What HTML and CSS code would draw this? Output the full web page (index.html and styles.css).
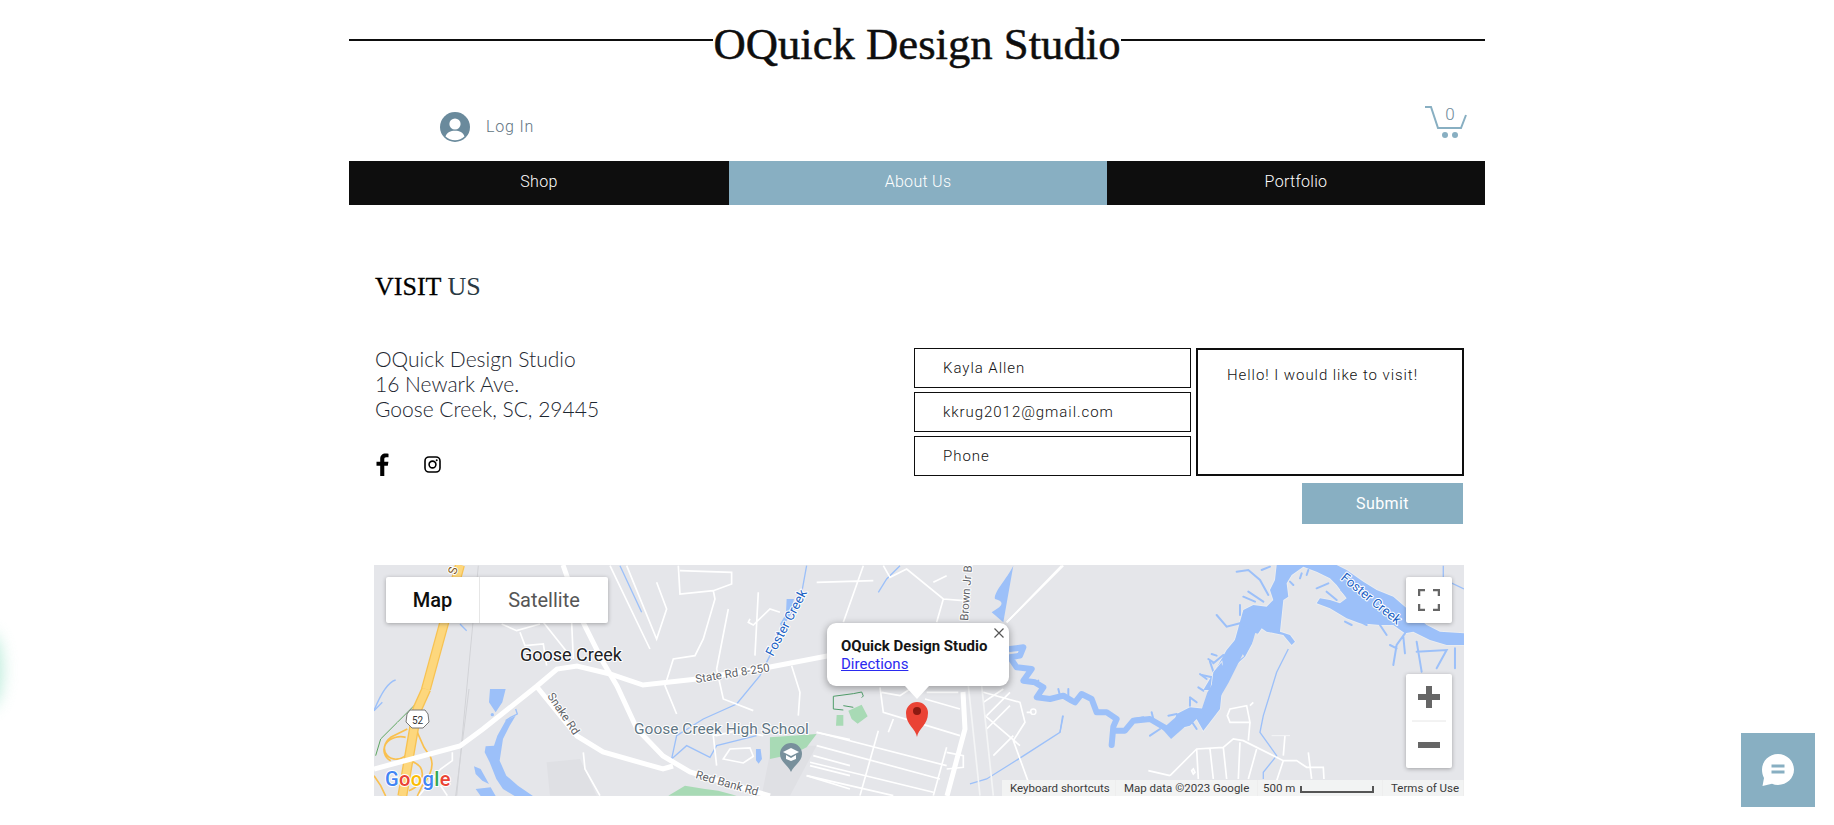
FILE: index.html
```html
<!DOCTYPE html>
<html lang="en">
<head>
    <meta charset="UTF-8">
    <meta name="viewport" content="width=device-width, initial-scale=1.0">
    <title>OQuick Design Studio</title>
    <link rel="stylesheet" href="styles.css">
</head>
<body>
    <div class="side-glow"></div>
    <div class="site">
        <header>
            <div class="title-row">
                <span class="title-line"></span>
                <h1>OQuick Design Studio</h1>
                <span class="title-line"></span>
            </div>
            <div class="user-row">
                <a class="login" href="#">
                    <svg class="avatar" viewBox="0 0 30 30">
                        <circle cx="15" cy="15" r="15" fill="#6a8a9c"/>
                        <circle cx="15" cy="12" r="5.6" fill="#fff"/>
                        <path d="M5.500 24.500c1.500-4.500 5-5.800 9.500-5.800s8 1.300 9.500 5.800c-2.500 2.300-5.800 3.700-9.500 3.700s-7-1.400-9.500-3.700z" fill="#fff"/>
                    </svg>
                    <span>Log In</span>
                </a>
                <svg class="cart" viewBox="0 0 42 32">
                    <path d="M0 1h6l7 21h23l5-13" fill="none" stroke="#88afc2" stroke-width="2"/>
                    <circle cx="20" cy="29" r="3" fill="#88afc2"/>
                    <circle cx="30" cy="29" r="3" fill="#88afc2"/>
                    <text x="25" y="14" text-anchor="middle" class="cart-count">0</text>
                </svg>
            </div>
            <nav class="menu">
                <a href="#">Shop</a>
                <a href="#" class="menu-about">About Us</a>
                <a href="#">Portfolio</a>
            </nav>
        </header>

        <main>
            <h2><b>VISIT</b> US</h2>
            <div class="contact-row">
                <div class="address">
                    <p>OQuick Design Studio<br>16 Newark Ave.<br>Goose Creek, SC, 29445</p>
                    <div class="social">
                        <svg class="icon-fb" viewBox="0 0 14 23"><path d="M9.300 23V12.800h3.500l.6-4H9.300V6.300c0-1.200.4-2 2-2h2.200V.7C13.100.6 11.900.5 10.500.5 7.400.5 5.200 2.400 5.200 5.900v2.900H1.500v4h3.700V23z" fill="#000"/></svg>
                        <svg class="icon-ig" viewBox="0 0 17 17">
                            <rect x="1" y="1" width="15" height="15" rx="4" fill="none" stroke="#000" stroke-width="1.600"/>
                            <circle cx="8.500" cy="8.500" r="3.400" fill="none" stroke="#000" stroke-width="1.600"/>
                            <circle cx="12.700" cy="4.300" r="1" fill="#000"/>
                        </svg>
                    </div>
                </div>
                <form class="visit-form" onsubmit="return false">
                    <input type="text" value="Kayla Allen">
                    <textarea class="message">Hello! I would like to visit!</textarea>
                    <input type="email" value="kkrug2012@gmail.com">
                    <input type="text" placeholder="Phone">
                    <button type="submit">Submit</button>
                </form>
            </div>

            <div class="map">
                <svg class="map-art" viewBox="0 0 1090 231">
                    <!-- left part of the map -->
                    <g transform="translate(-4 -6) scale(.3333)">
                        <path class="z-block" d="M530 610l100-10 50 110H540z"/>
                        <path class="z-block" d="M1205 560h135l-80 150h-85z"/>
                        <path class="z-park" d="M1200 535l140-10-30 40-40 20-70 15z"/>
                        <path class="z-park" d="M895 710l50-30 60 10 40 5 55 15z"/>
                        <path class="z-water" d="M1250 120h22l-12 50-22 35-8-10 18-30zM1158 570h14l4 30-10 14-8-10z"/>
                        <path class="z-stream" d="M1310 20l-20 110-50 60-40 100-30 60-70 85-100 45-80 50-15 70 45-40 70 35 20-35 120-30M750 20l65 140M12 455c20-50 40-85 65-92M270 195l20 20"/>
                        <path class="z-grey" d="M325 20l-65 690"/>
                        <g class="z-road">
                            <path d="M720 20l120 250M770 20l90 220 30-90-30-80M640 190l60 120M395 195l45 20 70-20M450 220l15 40 55-5 10 65M520 190l80 100M605 190l5 110"/>
                            <path d="M925 20l5 85 100-10 55-20v-35l-155-5M1030 95l5 25-35 120-25 50-65 10-25 80 35 85M1075 150l-35 180 20 90 90 35M1165 100l-10 190M1140 180l-5 10 15 8 50-48 30 10M1265 320l25 80-5 70M640 580l5 50 45 80"/>
                            <path d="M1340 520l100 22M1310 650l130 40M1330 590l110 30M1320 620l120 30"/>
                            <path d="M1080 570l-20 30 60 12 30-20-10-25zM1030 530l10 90M1020 525l20 5 60-15 80 15"/>
                        </g>
                    </g>

                    <!-- middle part of the map -->
                    <g transform="translate(426 -6) scale(.3333)">
                        <path class="z-park" d="M145 455l40-18 18 35-30 22-18-14zM110 468h20v32h-22z"/>
                        <path class="z-parkline" d="M100 450v-38l60-8 25-5 5 12-5 5M100 450l30 3M130 440l30 5"/>
                        <path class="z-water" d="M640 20c-20 40-60 80-55 100 20 5 30 15 5 30l-15 10 35 30"/>
                        <path class="z-stream" d="M300 20l-40 40-25 40M790 470l-10 50-140 90-80 50-50 15"/>
                        <g class="z-road">
                            <path d="M190 20l-60 170M250 20l20 35 50-25 110 90 60 5M430 120l-20 70M620 190L790 20M50 70l170-5M400 70l40-20"/>
                            <path d="M240 385l10 75 230 70M245 400l55 10 30-20M380 400l95 0M375 420l105 30M280 480l-15 40"/>
                            <path d="M50 520l390 100M50 560l370 100M30 610l370 90M20 650l260 60M235 515l-55 195M440 565l-40 145M440 580l50 10v35l-50 5"/>
                            <path d="M550 430l60-40M560 470l70-70M550 400l110 30 15 60-35 55 60 165M555 470l105 90M560 510l70-70M580 590l60-60M680 460h15"/>
                        </g>
                        <path class="z-road-light" d="M505 380l35 330M545 380l35 330"/>
                        <circle cx="700" cy="458" r="8" class="z-ring"/>
                    </g>

                    <!-- right part of the map -->
                    <g transform="translate(626 -6) scale(.3333)">
                        <path class="z-stream" d="M865 270l-35 70-40 130-10 50 50 70-40 50v20M1330 20v40l62 30M188 470l-8 50"/>
                        <g class="z-road">
                            <path d="M510 650l80-80 80-5 30-25 30 5 120 60h40l30 20h50l2 35M590 570l5 90M630 570l10 90M670 565l10 95M720 550l-5 110M770 570l-25 90M850 605l-20 60"/>
                            <path d="M690 450l50-10 10 50h-60l-8-20zM750 440l10-10M750 490l-5 55M855 530l-5 60M925 580l10 80M445 635l65 15M580 630l5 10-5 5-5-10zM185 20L20 190"/>
                        </g>
                        <path class="z-thin" d="M815 530h55"/>
                    </g>

                    <!-- creek, traced from its banks -->
                    <g transform="translate(786 0) scale(.3333)">
                        <path class="z-water z-bank" d="M350 0H530l30 15 50 35 40 25 50 20 40 35 60 50 40 20 72 5v35h-52l-50-15-50-25-25 5-35-25h-40l-60-5-40-15-50-30-40-15 10-15 30 5 30 10 20-15-30-40-20-20-40-20-40-15-35 25-15 25 5 40-15 10-10 95 30 10 15 20-10 10-25-30-50-10-15-10-20 30-30 55-45 40-20 30-15 30h-45l30-50 40-70 25-30 15-55 10-35 30-15 40 5 20-20-10-30 15-30z"/>
                        <path class="z-water" d="M580 80l30 25 40 30 40 30-50-10-50-30-20-20-30-30 20-5z"/>
                        <path class="z-branch" d="M230 20l35-5 35 30 25 45M265 80l45 30M250 95l35 15M170 150l30 35 40-10M240 120v30M160 295l30-25M125 330l45 10M150 290l10 30M330 5l-25 10M470 70l35-15M500 80l30 25M400 60l-10-10M420 40l5-15M440 30l5-15"/>
                        <path class="z-land" d="M220 200l-15 30M290 205l-10 35M250 270l-20 15M215 310l-20 20"/>
                        <path class="z-branch" d="M735 205l-25 35-10 60M730 215l5 50M690 240l20 10M770 230l15 90M770 260l90-5-30 55M885 250v60M600 170l20 10M660 180l20 30M555 170l20 10"/>
                    </g>
                    <g transform="translate(626 54) scale(.3333)">
                        <path class="z-water z-bank" d="M665 130l5 40-10 100-50 65-20-35-20 20-40 10-15-5 15-40 40-20 50 5 10-30 10-80z"/>
                        <path class="z-river-wide" d="M745 30l-25 48-50 100-30 52-20 60"/>
                        <path class="z-river-wide" d="M540 310l-40 35"/>
                        <path class="z-river" d="M510 335l-60-35-50 5-25 30h-35M335 378l5-55 10-23-30-20h-30l-15-40-30-15-20 25-10-5-25-15-40 10-40-5 20-30-25-15-35-5 25-35-45-5-20-30 30-5 10-25-40 5"/>
                        <path class="z-branch" d="M590 250l-20-15M610 215l-15-10M620 180l-20-15M640 130l-15-10M650 110l-15-5M570 260v-20M530 285l-25 5M460 300l-5-20M430 295l-30 5M480 330l-30 20M520 320l-5 25M570 300l20 30M180 230l-5-20M205 230v-20M110 195l5-10M665 200l15-25M670 150l15-10"/>
                    </g>

                    <!-- highway 52 and the main roads, from the lower left -->
                    <g transform="translate(0 124) scale(.3333)">
                        <path class="z-water" d="M425 80l-30 15-25 45-10 30-25 2-3 18 15 30 20 50 20 30 35 21h55l-45-31-35-30-20-45 10-65 20-40zM300 232l20 8 25 45-20-10-20-20zM305 300l45-5 15 26h-45zM348 0l-3 40 20 30 20-30 10-40z"/>
                        <circle cx="355" cy="77" r="5" class="z-fill-water"/>
                        <path class="z-stream" d="M25 40L0 65M395 95l15-10 20-10-5-15"/>
                        <path class="z-grey" d="M285 0l-40 321"/>
                        <path class="z-ramp" d="M100 120l-50 25c-20 15-25 40-10 55s40 15 60-5M95 145c-20-5-45 0-60 20-10 15-5 40 15 50M130 130l20 45 20 30c10 25 0 55-25 85l-15 31M105 215c20 5 40 15 40 40s-15 40-40 50M0 260l20 30 15 31"/>
                        <path class="z-green" d="M130 40l-60 60-50 50-15 50"/>
                        <path class="z-hw-edge" d="M157 0L130 60 85 321"/>
                        <path class="z-hw" d="M157 0L130 60 85 321"/>
                    </g>
                    <path class="hw-edge" d="M86 0L52 124"/>
                    <path class="hw" d="M86 0L52 124"/>

                    <g class="road-main">
                        <path d="M0 204l86-23 23-17 54-43 20-17 20-3 33 8 33 11 54-6 73-12 57-11h150"/>
                        <path d="M189 0l20 57 20 40 14 24 20 43 26 27 27 16 33 10 47 14"/>
                        <path d="M163 122l40 49 26 16 60 17 10-3M589 127l2 37-18 67"/>
                    </g>
                    <g transform="translate(0 124) scale(.3333)">
                        <path class="z-road" d="M235 190v25l-35 25-65 80M200 290l20 30"/>
                    </g>

                    <!-- route 52 shield -->
                    <path class="shield" d="M33 149l3-4h15l3 4 1 8-6 6H38l-6-6z"/>
                    <text class="label-shield" x="43.500" y="158.500" text-anchor="middle">52</text>

                    <text class="label-brown" transform="translate(82 10) rotate(-76)">S</text>
                    <text class="label-city" x="146" y="96">Goose Creek</text>
                    <text class="label-school" x="260" y="169">Goose Creek High School</text>
                    <text class="label-road" transform="translate(322 118) rotate(-9)">State Rd 8-250</text>
                    <text class="label-road" transform="translate(173 131) rotate(56)">Snake Rd</text>
                    <text class="label-road" transform="translate(321 213) rotate(16)">Red Bank Rd</text>
                    <text class="label-road" transform="translate(594 56) rotate(-86)">Brown Jr Blvd</text>
                    <text class="label-water" transform="translate(399 92) rotate(-62)">Foster Creek</text>
                    <text class="label-water" transform="translate(966 14) rotate(39)">Foster Creek</text>

                    <!-- school pin -->
                    <path class="pin-school" d="M417 207c-2-6-11-10-11-18a11 11 0 0 1 22 0c0 8-9 12-11 18z"/>
                    <path d="M409 187l8-4 8 4-8 4zM412 190v4l5 2 5-2v-4l-5 3z" fill="#fff"/>

                    <!-- marker -->
                    <path class="pin-red" d="M543 172c-1-8-11-12-11-24a11 11 0 0 1 22 0c0 12-10 16-11 24z"/>
                    <circle cx="543" cy="146" r="4" fill="#8b1a12"/>

                    <text class="google-logo" x="11" y="221"><tspan fill="#4285f4">G</tspan><tspan fill="#ea4335">o</tspan><tspan fill="#fbbc05">o</tspan><tspan fill="#4285f4">g</tspan><tspan fill="#34a853">l</tspan><tspan fill="#ea4335">e</tspan></text>
                </svg>

                <div class="map-type">
                    <span class="map-type-on">Map</span>
                    <span class="map-type-off">Satellite</span>
                </div>

                <button class="map-btn map-full" type="button">
                    <svg viewBox="0 0 22 22" width="22" height="22"><path d="M1 7V1h6M15 1h6v6M21 15v6h-6M7 21H1v-6" fill="none" stroke="#666" stroke-width="2.500"/></svg>
                </button>
                <div class="map-zoom">
                    <svg viewBox="0 0 46 94" width="46" height="94">
                        <path d="M12 23h22M23 12v22" stroke="#666" stroke-width="6" fill="none"/>
                        <path d="M6 47h34" stroke="#e6e6e6" stroke-width="1"/>
                        <path d="M12 71h22" stroke="#666" stroke-width="6" fill="none"/>
                    </svg>
                </div>

                <div class="popup">
                    <strong>OQuick Design Studio</strong>
                    <a href="#">Directions</a>
                    <svg class="popup-close" viewBox="0 0 10 10"><path d="M.5.5l9 9M9.500.5l-9 9" stroke="#555" stroke-width="1.200"/></svg>
                </div>

                <div class="attribution">
                    <span class="attr-keys">Keyboard shortcuts</span>
                    <span class="attr-data">Map data ©2023 Google</span>
                    <span class="attr-scale">500 m<i class="scale-bar"></i></span>
                    <span class="attr-terms">Terms of Use</span>
                </div>
            </div>
        </main>
    </div>

    <button class="chat-btn" type="button">
        <svg viewBox="0 0 34 34" width="34" height="34">
            <path d="M17 1c8.800 0 16 6.900 16 15.600S25.800 32 17 32c-2.200 0-4.200-.4-6-1.200L1.500 33 3 25C1.700 22.800 1 19.800 1 16.600 1 7.900 8.200 1 17 1z" fill="#fff"/>
            <rect x="10.500" y="11.500" width="13" height="3" fill="#88afc2"/>
            <rect x="10.500" y="17.500" width="13" height="3" fill="#88afc2"/>
        </svg>
    </button>
</body>
</html>
```

FILE: styles.css
```css
* {
    box-sizing: border-box;
}
html, body {
    margin: 0;
    height: 825px;
    overflow: hidden;
    background: #fff;
}
body {
    font-family: Roboto, "Liberation Sans", sans-serif;
    color: #0e0e0e;
}
a {
    text-decoration: none;
}
.site {
    width: 1136px;
    margin: 0 auto;
}

/* header */
.title-row {
    display: flex;
    align-items: flex-start;
    height: 80px;
}
.title-line {
    flex: 1;
    height: 2px;
    margin-top: 39px;
    background: #0e0e0e;
}
h1 {
    margin: 8px 0 0;
    font-family: "Liberation Serif", serif;
    font-size: 44.700px;
    font-weight: 400;
    line-height: 72px;
    white-space: nowrap;
    -webkit-text-stroke: .5px #0e0e0e;
}
.user-row {
    display: flex;
    justify-content: space-between;
    align-items: flex-start;
    height: 81px;
    padding: 26px 18px 0 91px;
}
.login {
    display: flex;
    align-items: center;
    gap: 16px;
    margin-top: 6px;
    color: #5f7482;
    font-size: 16px;
    font-weight: 300;
    letter-spacing: .8px;
}
.login span {
    margin-top: -2px;
}
.avatar {
    width: 30px;
    height: 30px;
}
.cart {
    width: 42px;
    height: 32px;
    overflow: visible;
}
.cart-count {
    font-family: Roboto, sans-serif;
    font-size: 17px;
    font-weight: 300;
    fill: #6d8899;
}
.menu {
    display: grid;
    grid-template-columns: 380px 378px 378px;
    height: 44px;
}
.menu a {
    color: #fff;
    font-size: 16px;
    font-weight: 300;
    letter-spacing: .3px;
    line-height: 42px;
    text-align: center;
    background: #0e0e0e;
}
.menu .menu-about {
    background: #88afc2;
}

/* visit section */
main {
    padding: 0 21px 0 25px;
}
h2 {
    margin: 67px 0 45px 1px;
    font-family: "Liberation Serif", serif;
    font-size: 26px;
    font-weight: 400;
    line-height: 30px;
    color: #2a3a44;
}
h2 b {
    font-weight: 400;
    color: #000;
    -webkit-text-stroke: .3px #000;
}
.contact-row {
    display: flex;
    justify-content: space-between;
    margin-bottom: 41px;
}
.address p {
    margin: -1px 0 0 1px;
    font-family: Lato, sans-serif;
    font-size: 21px;
    font-weight: 300;
    line-height: 25px;
    color: #1c2630;
}
.social {
    display: flex;
    align-items: center;
    gap: 35px;
    margin: 32px 0 0 1px;
    height: 23px;
}
.icon-fb {
    width: 14px;
    height: 23px;
}
.icon-ig {
    width: 17px;
    height: 17px;
}
.visit-form {
    display: grid;
    grid-template-columns: 277px 268px;
    grid-template-rows: 40px 40px 40px auto;
    gap: 4px 5px;
    margin-top: 1px;
}
.visit-form input,
.visit-form textarea {
    font-family: Roboto, sans-serif;
    font-size: 15px;
    font-weight: 300;
    letter-spacing: .95px;
    color: #111;
    background: #fff;
    border-radius: 0;
    outline: none;
}
.visit-form input {
    width: 100%;
    padding: 0 0 1px 28px;
    border: 1px solid #0e0e0e;
}
.visit-form input::placeholder {
    color: #111;
    opacity: 1;
}
.visit-form .message {
    grid-column: 2;
    grid-row: 1 / span 3;
    padding: 16px 10px 0 29px;
    border: 2px solid #0e0e0e;
    resize: none;
}
.visit-form button {
    grid-column: 2;
    grid-row: 4;
    justify-self: end;
    width: 161px;
    height: 41px;
    margin: 3px 1px 0 0;
    border: none;
    color: #fff;
    font-family: Roboto, sans-serif;
    font-size: 16px;
    font-weight: 400;
    letter-spacing: .4px;
    background: #88afc2;
}

/* map */
.map {
    position: relative;
    height: 231px;
    overflow: hidden;
    background: #e5e6ea;
}
.map-art {
    display: block;
    width: 1090px;
    height: 231px;
}
/* the z- classes are drawn in groups scaled to a third, so widths are x3 */
.z-block {
    fill: #dfe0e4;
}
.z-park {
    fill: #a8dab5;
}
.z-parkline {
    fill: none;
    stroke: #4f9d69;
    stroke-width: 3;
}
.z-water,
.z-fill-water {
    fill: #9cc0f9;
}
.z-bank {
    stroke: #eceef1;
    stroke-width: 5;
    paint-order: stroke;
}
.z-stream {
    fill: none;
    stroke: #9cc0f9;
    stroke-width: 4;
}
.z-river {
    fill: none;
    stroke: #9cc0f9;
    stroke-width: 18;
    stroke-linejoin: round;
    stroke-linecap: round;
}
.z-river-wide {
    fill: none;
    stroke: #9cc0f9;
    stroke-width: 40;
    stroke-linejoin: round;
}
.z-branch {
    fill: none;
    stroke: #9cc0f9;
    stroke-width: 6;
    stroke-linecap: round;
}
.z-land {
    fill: none;
    stroke: #e5e6ea;
    stroke-width: 9;
}
.z-grey {
    fill: none;
    stroke: #d2d3d7;
    stroke-width: 3;
}
.z-road {
    fill: none;
    stroke: #fff;
    stroke-width: 5;
}
.z-road-light {
    fill: none;
    stroke: #f4f5f6;
    stroke-width: 5;
}
.z-thin {
    fill: none;
    stroke: #f5f5f7;
    stroke-width: 3;
}
.z-ring {
    fill: none;
    stroke: #fff;
    stroke-width: 4;
}
.z-ramp {
    fill: none;
    stroke: #f9c04f;
    stroke-width: 5;
}
.z-green {
    fill: none;
    stroke: #5da65f;
    stroke-width: 3;
}
.z-hw-edge {
    fill: none;
    stroke: #f7c252;
    stroke-width: 30;
}
.z-hw {
    fill: none;
    stroke: #fdd77d;
    stroke-width: 22;
}
.hw {
    fill: none;
    stroke: #fdd77d;
    stroke-width: 7.500;
}
.hw-edge {
    fill: none;
    stroke: #f7c252;
    stroke-width: 10;
}
.road-main path {
    fill: none;
    stroke: #fff;
    stroke-width: 5;
}
.shield {
    fill: #fff;
    stroke: #777;
    stroke-width: 1;
}
.map-art text {
    font-family: Roboto, sans-serif;
    paint-order: stroke;
    stroke: #fff;
    stroke-width: 2px;
    stroke-linejoin: round;
}
.map-art .label-shield {
    font-size: 10px;
    fill: #333;
    stroke: none;
}
.label-brown {
    font-size: 12px;
    fill: #80581c;
}
.label-city {
    font-size: 18px;
    fill: #202124;
}
.label-school {
    font-size: 15.500px;
    fill: #5f7684;
}
.label-road {
    font-size: 11.500px;
    fill: #5f6368;
}
.label-water {
    font-size: 13px;
    fill: #1a5fc4;
}
.pin-school {
    fill: #78909c;
}
.pin-red {
    fill: #ea4335;
}
.google-logo {
    font-size: 20px;
    font-weight: 500;
    letter-spacing: .4px;
}

.map-type {
    position: absolute;
    left: 12px;
    top: 12px;
    display: flex;
    height: 46px;
    border-radius: 2px;
    background: #fff;
    box-shadow: 0 1px 4px rgba(0, 0, 0, .3);
    font-size: 20px;
    line-height: 46px;
    text-align: center;
}
.map-type-on {
    width: 94px;
    font-weight: 500;
    color: #0e0e0e;
    border-right: 1px solid #e6e6e6;
}
.map-type-off {
    width: 128px;
    color: #565656;
}
.map-btn {
    position: absolute;
    left: 1032px;
    top: 12px;
    display: flex;
    align-items: center;
    justify-content: center;
    width: 46px;
    height: 46px;
    padding: 0;
    border: none;
    border-radius: 2px;
    background: #fff;
    box-shadow: 0 1px 4px rgba(0, 0, 0, .3);
}
.map-zoom {
    position: absolute;
    left: 1032px;
    top: 109px;
    width: 46px;
    height: 94px;
    border-radius: 2px;
    background: #fff;
    box-shadow: 0 1px 4px rgba(0, 0, 0, .3);
}
.map-zoom svg {
    display: block;
}
.popup {
    position: absolute;
    left: 453px;
    top: 58px;
    width: 182px;
    height: 63px;
    padding: 14px 14px 0;
    border-radius: 9px;
    background: #fff;
    box-shadow: 0 2px 7px 1px rgba(0, 0, 0, .3);
    font-size: 15px;
    line-height: 18px;
}
.popup::after {
    content: "";
    position: absolute;
    left: 78px;
    top: 63px;
    border-left: 12.500px solid transparent;
    border-right: 12.500px solid transparent;
    border-top: 13px solid #fff;
}
.popup strong {
    display: block;
    font-weight: 700;
    color: #151515;
    white-space: nowrap;
}
.popup a {
    color: #2a2af0;
    text-decoration: underline;
}
.popup-close {
    position: absolute;
    right: 5px;
    top: 5px;
    width: 10px;
    height: 10px;
}
.attribution {
    position: absolute;
    right: 0;
    bottom: 0;
    display: flex;
    width: 462px;
    height: 16px;
    font-size: 11.500px;
    line-height: 16px;
    color: #3a3a3a;
}
.attribution span {
    display: block;
    padding-left: 8px;
    background: rgba(245, 245, 245, .85);
    white-space: nowrap;
    border-right: 1px solid #eee;
}
.attr-keys {
    width: 114px;
}
.attr-data {
    width: 142px;
}
.attr-scale {
    position: relative;
    width: 125px;
    padding-left: 5px !important;
}
.scale-bar {
    position: absolute;
    left: 42px;
    top: 6px;
    width: 74px;
    height: 7px;
    border: 2px solid #555;
    border-top: none;
}
.attr-terms {
    width: 81px;
}

.chat-btn {
    position: fixed;
    left: 1741px;
    top: 733px;
    display: flex;
    align-items: center;
    justify-content: center;
    width: 74px;
    height: 74px;
    padding: 0;
    border: none;
    background: #88afc2;
}
.side-glow {
    position: fixed;
    left: -26px;
    top: 632px;
    width: 28px;
    height: 76px;
    border-radius: 50%;
    background: #a8e6cf;
    filter: blur(8px);
    opacity: .8;
}
```
